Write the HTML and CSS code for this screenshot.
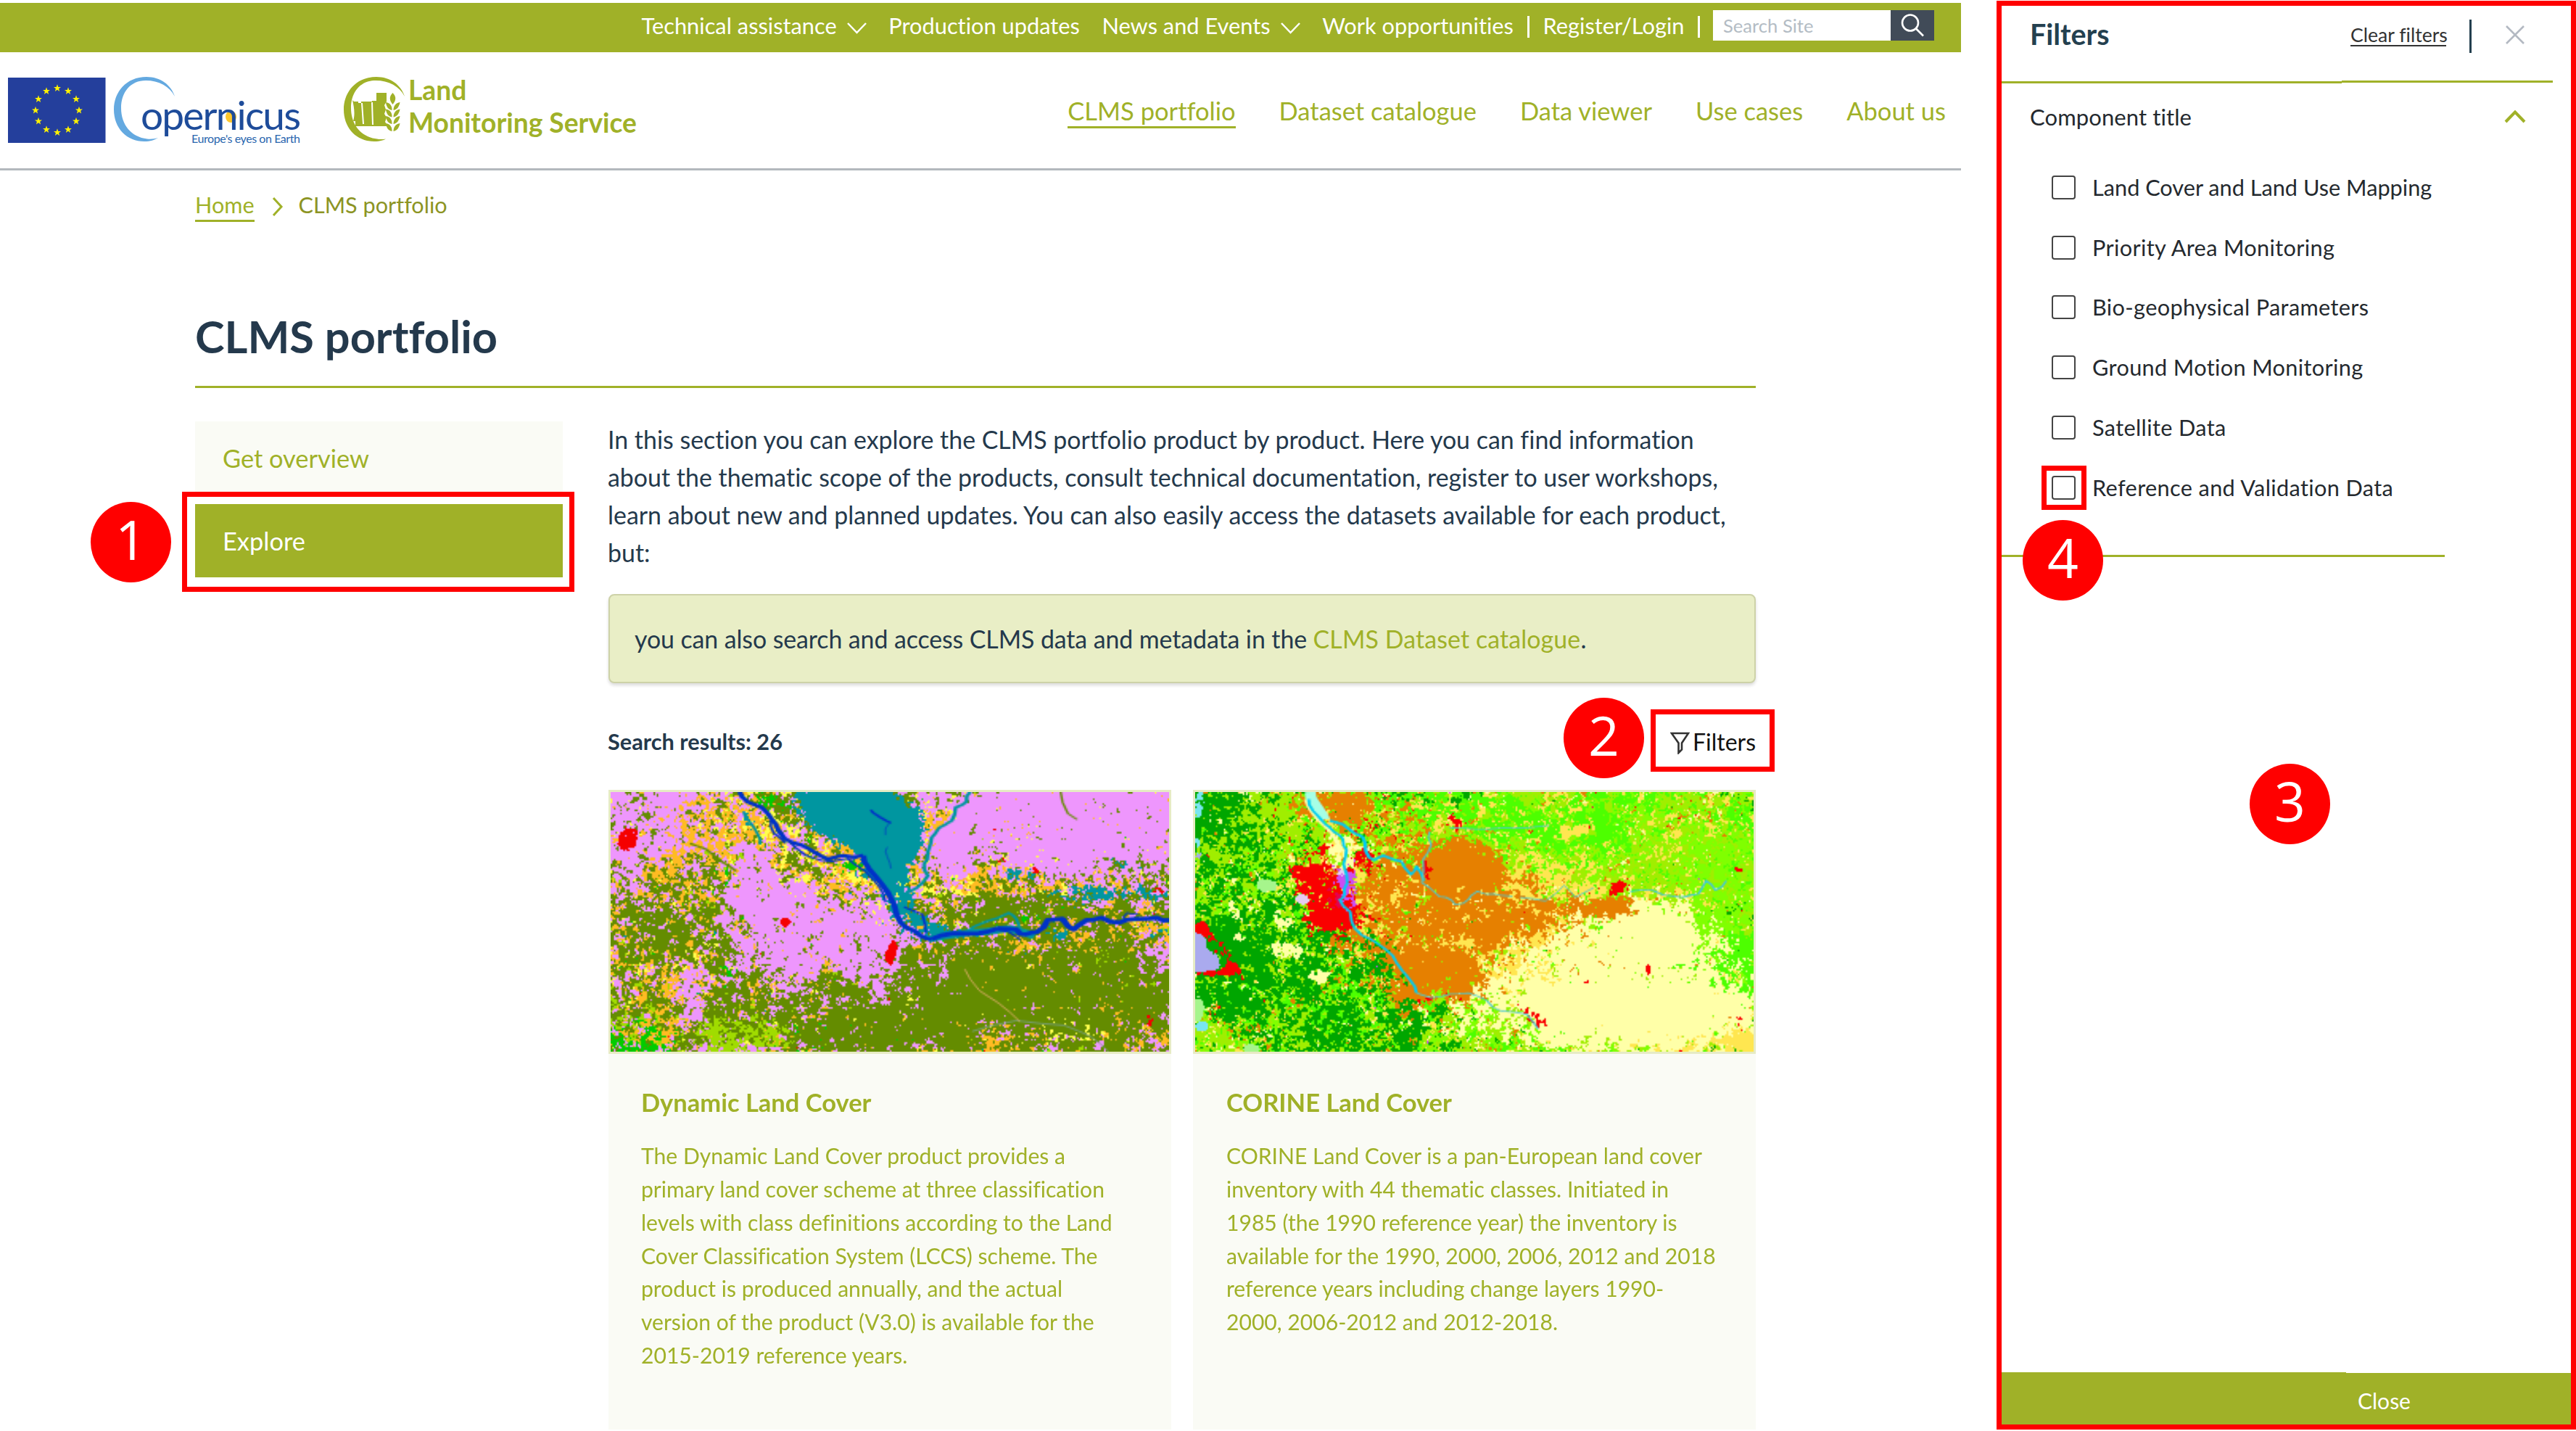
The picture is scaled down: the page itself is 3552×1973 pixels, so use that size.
FILE: index.html
```html
<!DOCTYPE html>
<html lang="en">
<head>
<meta charset="utf-8">
<title>CLMS portfolio</title>
<link rel="stylesheet" href="styles.css">
</head>
<body>
<div class="page">
  <header>
    <nav class="topbar">
      <a>Technical assistance <svg class="chev" viewBox="0 0 27 16"><path d="M1 1l12.500 13L26 1"/></svg></a>
      <a>Production updates</a>
      <a>News and Events <svg class="chev" viewBox="0 0 27 16"><path d="M1 1l12.500 13L26 1"/></svg></a>
      <a>Work opportunities</a>
      <span class="account"><i class="pipe"></i><a>Register/Login</a><i class="pipe"></i></span>
      <span class="search"><span class="search-input">Search Site</span><span class="search-btn"><svg viewBox="0 0 32 32"><circle cx="13" cy="12.500" r="11"/><path d="M21 20.500l10 10"/></svg></span></span>
    </nav>
    <div class="masthead">
      <svg class="logos" viewBox="0 72 900 160">
        <rect x="11" y="107" width="134.500" height="90" fill="#243f9c"/>
        <defs><path id="star" d="M0-5.200 1.300-1.600 5-1.600 2.100.7 3.100 4.400 0 2.200-3.100 4.400-2.100.7-5-1.600-1.300-1.600z"/></defs>
        <g class="stars" id="stars" fill="#fff200">
          <use href="#star" x="79" y="121.500"/><use href="#star" x="94" y="125.500"/><use href="#star" x="105" y="136.500"/><use href="#star" x="109" y="152"/><use href="#star" x="105" y="167"/><use href="#star" x="94" y="178.500"/><use href="#star" x="79" y="182.500"/><use href="#star" x="64" y="178.500"/><use href="#star" x="53" y="167"/><use href="#star" x="49" y="152"/><use href="#star" x="53" y="136.500"/><use href="#star" x="64" y="125.500"/>
        </g>
        <path id="swoosh" fill="#64a9e0" d="M241 133C236 117 221 106 202 106C174 106 157 127 157 151C157 177 175 195 199 195C207 195 213 193 218 190C213 191.500 208 192 203 191.500C181 189 167 172 167 149C167 127 180 111 201 111C219 111 234 119 241 133z"/>
        <ellipse cx="318.500" cy="161" rx="7.500" ry="8" fill="#ffc72c"/>
        <text x="194" y="179" class="cop" textLength="221">opernicus</text>
        <text x="264" y="197" class="eyes" textLength="150">Europe's eyes on Earth</text>
        <g fill="#a0b128">
          <path d="M558 133C553 117 538 106 519 106C491 106 474 127 474 151C474 177 492 195 516 195C524 195 530 193 532 191.500C527 192.500 522 192 520 191.500C498 189 484 172 484 149C484 127 497 111 518 111C536 111 551 119 558 133z"/>
          <path d="M488 140h6v2h4v-2h15v-1h6v-11h14v12l-3 5 2 6-2 6 3 5-2 6 2 3v3h-43v-7h-3c3-10 1-20-1-29z"/>
          <path d="M541.500 128c5 5 5 10 0 16c-5-6-5-11 0-16z"/>
          <g id="leafs"><path d="M540.500 152c-5-1-8-5-8.500-11c6 1 9 5 8.500 11zM542.500 152c5-1 8-5 9-11c-6 1-9 5-9 11z"/><path d="M540.500 161.500c-5-1-8-5-8.500-11c6 1 9 5 8.500 11zM542.500 161.500c5-1 8-5 9-11c-6 1-9 5-9 11z"/><path d="M540.500 171c-5-1-8-5-8.500-11c6 1 9 5 8.500 11zM542.500 171c5-1 8-5 9-11c-6 1-9 5-9 11z"/><path d="M540.500 181c-5-1-8-5-8.500-11c6 1 9 5 8.500 11zM542.500 181c5-1 8-5 9-11c-6 1-9 5-9 11z"/></g>
        </g>
        <path d="M499 142l2 29M513 141l1 31" stroke="#fff" stroke-width="2"/>
        <text x="563" y="138" class="land">Land</text>
        <text x="563" y="183" class="land">Monitoring Service</text>
      </svg>
      <nav class="mainnav"><a class="on">CLMS portfolio</a><a>Dataset catalogue</a><a>Data viewer</a><a>Use cases</a><a>About us</a></nav>
    </div>
  </header>
  <main>
    <div class="crumbs"><a>Home</a><svg viewBox="0 0 16 26"><path d="M2 1l11 12L2 25"/></svg><span>CLMS portfolio</span></div>
    <h1>CLMS portfolio</h1>
    <div class="columns">
      <aside>
        <a class="side">Get overview</a>
        <a class="side active">Explore
          <span class="mark mark-explore"></span><span class="num num-1">1</span></a>
      </aside>
      <section>
        <p class="intro">In this section you can explore the CLMS portfolio product by product. Here you can find information about the thematic scope of the products, consult technical documentation, register to user workshops, learn about new and planned updates. You can also easily access the datasets available for each product, but:</p>
        <div class="notice">you can also search and access CLMS data and metadata in the&nbsp;<a>CLMS Dataset catalogue</a>.</div>
        <div class="results"><b>Search results: 26</b>
          <span class="filter-btn"><svg viewBox="0 0 27 31"><path d="M2 2h23l-9 13.500v9L11.500 29V15.500z"/></svg>Filters
          <span class="mark mark-filter"></span><span class="num num-2">2</span></span></div>
        <div class="cards">
          <article><canvas id="dlc" width="352" height="163"></canvas><h2>Dynamic Land Cover</h2><p>The Dynamic Land Cover product provides a primary land cover scheme at three classification levels with class definitions according to the Land Cover Classification System (LCCS) scheme. The product is produced annually, and the actual version of the product (V3.0) is available for the 2015-2019 reference years.</p></article>
          <article><canvas id="clc" width="352" height="163"></canvas><h2>CORINE Land Cover</h2><p>CORINE Land Cover is a pan-European land cover inventory with 44 thematic classes. Initiated in 1985 (the 1990 reference year) the inventory is available for the 1990, 2000, 2006, 2012 and 2018 reference years including change layers 1990-2000, 2006-2012 and 2012-2018.</p></article>
        </div>
      </section>
    </div>
  </main>
</div>
<div class="panel">
  <div class="panel-head"><b>Filters</b><a>Clear filters</a><i></i><svg viewBox="0 0 26 26"><path d="M1 1l24 24M25 1L1 25"/></svg></div>
  <div class="rule"><i></i><i></i></div>
  <div class="group"><span>Component title</span><svg viewBox="0 0 30 18"><path d="M2 16L15 2.500 28 16"/></svg></div>
  <ul>
    <li><i class="box"></i>Land Cover and Land Use Mapping</li>
    <li><i class="box"></i>Priority Area Monitoring</li>
    <li><i class="box"></i>Bio-geophysical Parameters</li>
    <li><i class="box"></i>Ground Motion Monitoring</li>
    <li><i class="box"></i>Satellite Data</li>
    <li><i class="box"></i>Reference and Validation Data<span class="mark mark-box"></span></li>
  </ul>
  <div class="group-end"><span class="num num-4">4</span></div>
  <span class="num num-3">3</span>
  <div class="close"><i></i><span>Close</span></div>
</div>
<script src="maps.js"></script>
</body>
</html>
```
FILE: styles.css
```css
* { box-sizing: border-box; }
body { margin: 0; width: 3552px; height: 1973px; overflow: hidden; display: flex; gap: 49px; background: #fff; font-family: Lato, sans-serif; font-size: 33.9px; color: #24394c; font-variant-ligatures: none; }
svg { display: block; flex: none; fill: none; }
.page { width: 2704px; height: 1973px; overflow: hidden; flex: none; }
.topbar { margin-top: 4px; height: 68px; padding: 0 37px 6px 0; background: #a0b128; color: #fff; font-size: 30.8px; display: flex; align-items: center; justify-content: flex-end; gap: 30.500px; white-space: nowrap; }
.topbar a { display: flex; align-items: center; gap: 14px; }
.chev { width: 27px; height: 16px; margin-top: 7px; stroke: #fff; stroke-width: 2.5; }
.account { display: flex; align-items: center; gap: 18px; margin: 0 -12px 0 -11px; }
.pipe { width: 3px; height: 30px; background: #fff; margin-top: 3px; }
.search { display: flex; width: 305px; height: 42px; }
.search-input { width: 245px; background: #fff; color: #b3bcc4; font-size: 25.6px; line-height: 43px; padding-left: 14px; }
.search-btn { width: 60px; background: #414b58; display: flex; align-items: center; justify-content: center; }
.search-btn svg { width: 32px; height: 32px; stroke: #fff; stroke-width: 2.6; }
.masthead { height: 163px; border-bottom: 3px solid #b3b8bd; display: flex; justify-content: space-between; align-items: center; padding-right: 21px; }
.logos { width: 900px; height: 160px; }
.cop { font: 400 55px Lato, sans-serif; fill: #1e4c9a; }
.eyes { font: 400 16px Lato, sans-serif; fill: #2a66ae; }
.land { font: 700 37.2px Lato, sans-serif; fill: #a0b128; }
.mainnav { display: flex; gap: 60px; font-size: 34.5px; line-height: 42px; color: #a0b128; padding-top: 1px; }
.mainnav .on { box-shadow: 0 3px #a0b128; }
.crumbs { height: 94px; padding-left: 269px; display: flex; align-items: center; color: #8c9424; font-size: 30.6px; }
.crumbs a { color: #a0b128; line-height: 37px; border-bottom: 3px solid #a0b128; padding-bottom: 2px; margin-top: 5px; }
.crumbs svg { width: 16px; height: 26px; margin: 6px 21px 0 24px; stroke: #a0b128; stroke-width: 3; }
h1 { margin: 0 0 0 269px; width: 2152px; height: 206px; padding-top: 97px; line-height: 74px; font-size: 61.3px; font-weight: 700; border-bottom: 3px solid #a0b128; color: #24394c; }
.columns { display: grid; grid-template-columns: 507px 1582px; gap: 63px; margin: 46px 0 0 269px; }
aside { display: flex; flex-direction: column; gap: 13px; }
.side { position: relative; height: 101px; line-height: 101px; padding-left: 38px; background: #fafbf5; color: #a0b128; font-size: 34.4px; }
.active { background: #a0b128; color: #fff; }
.intro { margin: -1px 0 0 -1px; line-height: 52px; letter-spacing: .01px; }
.notice { margin-top: 31px; height: 123px; line-height: 121px; border: 2px solid #cdd2a8; border-radius: 8px; background: #e9eec6; box-shadow: 0 3px 4px rgba(0,0,0,.14); padding-left: 34px; letter-spacing: -.09px; }
.notice a { color: #a0b128; letter-spacing: .12px; }
.results { height: 147px; padding-top: 13px; display: flex; justify-content: space-between; align-items: center; font-size: 30.7px; }
.results b { margin-left: -1px; }
.filter-btn { position: relative; display: flex; align-items: center; gap: 4px; color: #111; font-size: 32px; }
.filter-btn svg { width: 27px; height: 31px; margin-top: 4px; stroke: #333; stroke-width: 2.6; }
.cards { display: grid; grid-template-columns: 776px 776px; gap: 30px; }
article { height: 882px; background: #fafbf5; color: #a0b128; }
canvas { display: block; width: 776px; height: 364px; border: 3px solid #e6ebc4; }
h2 { margin: 45px 46px 0 45px; font-size: 34.5px; line-height: 44px; }
article p { margin: 29px 56px 0 45px; font-size: 30.1px; line-height: 45.85px; }
article + article h2 { margin-left: 46px; }
article + article p { margin: 29px 53px 0 46px; }
.panel { position: relative; width: 799px; height: 1970px; margin-top: 1px; flex: none; border: 7px solid #f00; display: flex; flex-direction: column; font-size: 31px; color: #24292e; }
.panel-head { height: 103px; padding-left: 39px; display: flex; align-items: flex-start; color: #24404f; }
.panel-head b { font-size: 39.4px; line-height: 46px; margin-top: 16px; width: 442px; }
.panel-head a { font-size: 26.6px; line-height: 27px; border-bottom: 2.500px solid #333; color: #333; margin-top: 27px; width: 132px; white-space: nowrap; }
.panel-head i { width: 3px; height: 46px; background: #24404f; margin: 19px 47px 0 32px; }
.panel-head svg { width: 26px; height: 26px; margin-top: 27px; stroke: #b3b9c2; stroke-width: 2.6; }
.rule { display: flex; height: 4px; }
.rule i { width: 469px; height: 3px; background: #a0b128; margin-top: 1px; }
.rule i + i { width: 291px; margin-top: 0; }
.group { height: 91px; padding: 0 62px 0 39px; display: flex; align-items: center; justify-content: space-between; letter-spacing: .1px; }
.group svg { width: 30px; height: 18px; stroke: #a0b128; stroke-width: 4; }
ul { list-style: none; margin: 11px 0 0 69px; padding: 0; display: flex; flex-direction: column; }
li { position: relative; height: 82.8px; display: flex; align-items: center; gap: 23px; white-space: nowrap; font-size: 30.7px; letter-spacing: .35px; }
li:first-child { letter-spacing: 0; }
.box { width: 33px; height: 33px; border: 2.500px solid #444; border-radius: 4px; }
.group-end { position: relative; width: 611px; height: 54px; border-bottom: 3px solid #a0b128; }
.close { margin-top: auto; display: flex; height: 72px; color: #fff; font-size: 30px; line-height: 76px; }
.close i { width: 475px; background: #a0b128; }
.close span { flex: 1; background: #a0b128; margin-top: 1px; padding-left: 16px; }
.mark { position: absolute; border: 7px solid #f00; }
.mark-explore { left: -18px; top: -17px; width: 541px; height: 138px; }
.mark-filter { right: -26px; top: -25px; width: 171px; height: 86px; }
.mark-box { left: -14px; top: 11px; width: 62px; height: 61px; }
.num { position: absolute; width: 111px; height: 111px; border-radius: 50%; background: #f00; color: #fff; font: 400 75px/103px "Open Sans", sans-serif; letter-spacing: 0; text-align: center; }
.num-1 { left: -144px; top: -3px; }
.num-2 { right: 154px; top: -41px; }
.num-4 { left: 29px; top: 3px; }
.num-3 { left: 342px; top: 1045px; }
```
FILE: maps.js
```
// Land cover thumbnails: every cell takes the class with the highest score,
// where a score is a base level plus soft shapes plus speckle noise.
function hash(x, y, s) {
  let h = (x * 374761393 + y * 668265263 + s * 974634777) | 0;
  h = Math.imul(h ^ (h >>> 13), 1274126177);
  h = Math.imul(h ^ (h >>> 15), 2246822519);
  return ((h ^ (h >>> 16)) >>> 0) / 4294967295;
}
function smooth(x, y, s) {
  const i = Math.floor(x), j = Math.floor(y), f = x - i, g = y - j;
  const a = hash(i, j, s), b = hash(i + 1, j, s), c = hash(i, j + 1, s), d = hash(i + 1, j + 1, s);
  return a + (b - a) * f + (c - a + (a - b - c + d) * f) * g;
}
function speckle(x, y, s) {
  return (hash(x, y, s) - .5) * .6 + (smooth(x / 1.8, y / 1.8, s + 50) - .5) * 1.7 +
    (smooth(x / 5, y / 5, s + 90) - .5) * 1.1 + (smooth(x / 17, y / 17, s + 130) - .5) * .6;
}
function draw(id, grain, classes, lines) {
  const ctx = document.getElementById(id).getContext('2d'), W = 352, H = 163;
  const img = ctx.createImageData(W, H);
  const rgb = classes.map(c => [1, 3, 5].map(i => parseInt(c.color.substr(i, 2), 16)));
  for (let y = 0; y < H; y++) for (let x = 0; x < W; x++) {
    const px = x / W * 1514, py = y / H * 1085;
    let best = -9, win = 0;
    classes.forEach((c, k) => {
      let v = c.base;
      for (const [cx, cy, rx, ry, a, t] of c.at) {
        // t tilts a shape: its centre slides sideways as y grows
        const dx = (px - cx - (t || 0) * (py - cy)) / rx, dy = (py - cy) / ry, q = dx * dx + dy * dy;
        if (q < 6) v += a * Math.exp(-q * q * .6);
      }
      v += speckle(x, y, k * 7 + id.charCodeAt(0)) * (c.n || 1) * grain;
      if (v > best) { best = v; win = k; }
    });
    img.data.set([...rgb[win], 255], (y * W + x) * 4);
  }
  ctx.putImageData(img, 0, 0);
  ctx.scale(W / 1514, H / 1085);
  ctx.lineJoin = 'round';
  for (const [color, width, pts] of lines) {
    ctx.strokeStyle = color; ctx.lineWidth = width; ctx.beginPath();
    for (let i = 0; i < pts.length; i += 2) {
      ctx.lineTo(pts[i], pts[i + 1]);
      if (i + 3 < pts.length) ctx.lineTo((pts[i] + pts[i + 2]) / 2 + (hash(i, 3, 9) - .5) * 16, (pts[i + 1] + pts[i + 3]) / 2 + (hash(i, 5, 9) - .5) * 18);
    }
    ctx.stroke();
  }
}
draw('dlc', 1.15, [
  { color: '#ee96fd', base: 0, at: [[80,90,170,170,1,0],[1250,110,350,230,1.5,0],[920,250,60,120,.7,0],[400,290,60,80,.6,0],[440,420,110,90,.9,0],[560,580,230,150,1.1,0],[730,740,60,140,.8,0],[880,750,50,90,.6,0],[480,720,60,120,.6,0],[210,900,40,180,.9,.1],[1480,690,60,80,.8,0],[120,520,60,60,.4,0],[1100,980,50,40,.6,0],[40,330,50,90,.6,0]] },
  { color: '#648c00', base: .1, at: [[190,430,110,130,.5,-.2],[1200,830,420,200,1.1,0],[700,900,420,170,.6,0],[240,660,200,120,.4,0],[1050,400,150,90,.4,0],[1100,500,350,70,.4,0],[750,1020,200,80,.7,0],[480,70,60,60,.6,0],[300,1000,80,60,.5,0],[1000,680,120,60,.3,0]] },
  { color: '#ffbb22', base: -.25, at: [[290,110,160,120,.8,0],[150,270,50,60,.8,0],[600,370,130,120,.7,0],[430,200,60,90,.5,0],[860,180,40,150,.8,-.3],[1100,380,330,60,.5,0],[1350,600,200,70,.6,0],[1060,650,110,60,.6,0],[100,850,200,200,.3,0],[1050,1020,60,60,.7,0],[1450,1010,80,60,.6,0],[230,390,130,60,.4,0],[840,540,60,60,.5,0]] },
  { color: '#ffff4c', base: -.6, at: [[600,400,150,130,.7,0],[440,220,60,130,.7,0],[1100,270,100,70,1.1,0],[860,150,70,160,.7,-.4],[1000,380,320,50,.7,0],[780,70,60,60,.6,0],[1200,990,200,50,.6,.4],[740,520,50,50,.7,0],[300,120,150,100,.4,0]] },
  { color: '#a0dc00', base: -.75, at: [[370,1040,120,90,1.2,0],[150,950,200,120,.9,0],[1330,780,150,120,.7,0],[280,460,60,80,.4,0],[1100,560,200,60,.4,0],[870,870,80,60,.3,0]] },
  { color: '#00cc00', base: -1.05, at: [[70,1030,110,90,1.6,0],[540,1020,55,60,1.3,0],[440,40,45,40,1.6,.5],[650,310,45,30,1.8,0],[530,190,25,30,1.2,0],[1150,540,60,40,1.2,0],[310,760,40,60,1,0],[1040,530,60,40,.9,0],[220,800,30,30,.8,0]] },
  { color: '#0096a0', base: -1.1, n: .8, at: [[650,90,135,140,3.4,.45],[735,60,90,120,2.2,.55],[750,220,75,110,3.2,0],[760,370,45,130,2.2,.25],[820,550,75,75,1.8,.5],[700,350,60,25,1.5,0],[680,430,50,25,1.5,0],[1120,340,90,28,1.6,0],[1330,420,170,40,1.6,0],[1390,290,60,40,1.4,0],[1200,590,60,40,1.5,0],[1060,660,100,35,1.3,0],[380,110,25,50,1.3,0],[960,580,90,30,1.4,0],[1030,40,25,40,1.4,0],[1270,180,15,40,1.4,0],[1480,580,40,60,1.1,0]] },
  { color: '#f50000', base: -1.2, n: .85, at: [[44,195,27,52,4,-.1],[758,670,15,54,4,-.15],[473,540,15,22,3.4,0],[1060,280,11,16,2.6,0],[1035,145,10,14,2.6,0],[1150,325,10,14,2.6,0],[757,865,8,18,2.6,0],[1460,945,9,26,2.6,0],[1485,410,15,16,2.2,0]] }
], [
  ['#0096a0', 10, [975,0,965,40,935,65,925,120,890,150,870,190,860,250,850,300,860,350,830,400,790,435]],
  ['#0096a0', 8, [360,80,380,130,400,180,405,220]],
  ['#0096a0', 9, [960,590,1020,540,1080,505,1100,530,1110,590]],
  ['#0096a0', 30, [860,615,960,590,1080,570,1150,600]],
  ['#7aa08c', 4, [980,1000,1100,955,1230,975,1300,1020,1350,1085]],
  ['#e6b070', 4, [960,740,1000,830,1050,880,1110,960]],
  ['#0032c8', 14, [350,0,370,40,410,65,435,110,455,160,490,210,540,240,590,280,630,265,685,265]],
  ['#0032c8', 7, [490,215,530,265,570,285,600,290,640,280,680,265]],
  ['#0032c8', 7, [435,120,442,170,475,215]],
  ['#0032c8', 16, [685,265,700,320,735,385,760,445,775,510,800,565,840,600,870,615]],
  ['#0032c8', 6, [640,275,690,330,730,400,745,460]],
  ['#0032c8', 7, [795,480,845,510,855,590]],
  ['#0032c8', 18, [870,615,930,590,1000,590,1050,570,1100,575,1125,595,1155,585,1185,535,1225,530,1255,575,1290,535,1330,525,1380,545,1430,530,1480,525,1514,535]],
  ['#0032c8', 6, [1040,575,1080,585,1110,615]],
  ['#0032c8', 5, [1390,545,1400,505,1430,510]],
  ['#0032c8', 8, [705,75,730,105,760,130]],
  ['#0046c0', 4, [755,130,745,180]],
  ['#0046c0', 4, [750,230,750,270,760,320]],
  ['#648c00', 8, [215,215,260,240,300,290,340,330]],
  ['#648c00', 6, [1220,0,1240,90,1265,115]]
]);
draw('clc', 1.3, [
  { color: '#00a600', base: -.25, at: [[50,60,130,120,1,0],[80,330,160,330,.9,0],[250,640,230,160,.8,0],[60,750,120,140,.6,0],[300,900,220,200,.75,0],[500,740,50,90,1,0],[570,960,50,110,1.2,0],[660,910,25,40,1.3,0],[720,30,40,30,.8,0],[1430,490,50,50,.9,0],[450,1060,150,60,.7,0],[1200,500,350,600,-1,0],[1000,200,250,200,-.2,0],[700,480,300,400,-.5,0]] },
  { color: '#a0ee00', base: -.05, at: [[150,80,200,170,.5,0],[200,500,300,500,.3,0],[1100,200,500,250,.35,0],[800,950,300,150,.3,0],[1250,380,300,100,.3,0],[650,560,280,280,-.3,0]] },
  { color: '#4dff00', base: -.3, at: [[640,60,150,90,.7,0],[1000,90,220,150,.7,0],[900,230,200,120,.5,0],[1130,130,100,150,.5,0],[430,850,110,160,.7,0],[1480,720,80,130,1.6,0],[1490,180,100,200,.4,0],[600,500,250,300,-.4,0]] },
  { color: '#80ff00', base: -.25, at: [[1250,250,300,150,.7,0],[1400,530,130,120,.8,0],[1440,350,100,150,.6,0],[1000,60,300,80,.3,0],[1480,850,70,150,.4,0],[760,920,120,120,.3,0],[600,500,250,300,-.4,0]] },
  { color: '#ffffa8', base: -.6, at: [[1180,760,330,270,2.1,0],[1260,560,120,110,1.4,0],[960,920,230,140,1.1,0],[1350,950,180,140,1.3,0],[250,660,50,35,2.3,.5],[330,770,30,35,2.3,0],[105,490,13,50,2.4,.2],[115,600,30,20,2,0],[50,110,20,22,2.3,.7],[235,545,20,35,1.8,0],[390,250,40,80,1.6,0],[120,25,30,40,1.2,0],[770,440,40,30,1.3,0],[60,1030,40,40,.9,0],[480,240,20,30,1,0]] },
  { color: '#ffe650', base: -.4, at: [[650,450,350,250,.4,0],[1000,160,60,25,1.8,-.6],[370,170,25,120,1.1,.2],[1150,150,330,170,.6,0],[980,380,280,70,.8,0],[900,640,150,150,.9,0],[850,830,150,120,.6,0],[1300,1050,130,50,1.4,0],[1480,1050,50,60,1.6,0],[1420,720,50,120,.6,0],[700,100,250,80,.5,0],[1350,440,200,50,.6,0],[730,560,60,160,.3,0]] },
  { color: '#e68000', base: -.7, at: [[400,55,70,85,2,0],[730,330,90,105,2.4,0],[550,250,150,180,.8,0],[680,560,300,290,1.2,0],[620,570,130,140,.5,0],[680,780,120,110,1.1,0],[870,500,160,110,.6,0],[1130,480,80,45,2,0],[800,600,50,70,.8,0],[920,360,80,30,.8,0],[560,880,40,70,1.4,0],[290,60,50,90,1,0],[490,700,90,100,.5,.8],[1050,520,150,80,.7,0],[840,1040,60,60,.6,0]] },
  { color: '#fa0000', base: -1.15, n: .95, at: [[365,430,95,110,2,0],[290,340,60,40,1.2,0],[400,520,90,50,1.2,0],[450,290,40,40,1.4,0],[500,170,130,150,.6,0],[340,260,40,60,.9,0],[350,580,70,60,.9,0],[630,320,15,35,2.8,0],[60,640,25,100,2.4,.5],[40,745,45,25,3.4,0],[100,740,25,30,2.8,0],[15,570,20,30,2.8,0],[1145,400,25,40,2.2,0],[920,940,30,50,2.5,.5],[860,900,30,25,1.6,0],[910,170,20,20,2,0],[1060,130,25,25,1.7,0],[710,120,35,40,1.4,-.4],[1060,800,10,28,3,0],[1225,740,7,28,3,0],[625,880,25,35,1.6,0],[1300,1070,35,18,2,0],[1485,960,25,50,1.8,0],[1470,320,13,16,2.4,0],[250,60,300,150,.25,0],[950,410,300,60,.4,0],[550,430,200,300,.25,0],[700,850,60,25,1.1,0],[130,790,20,20,1.6,0],[180,870,20,20,1.6,0]] },
  { color: '#cc4df2', base: -1.6, n: .9, at: [[405,370,30,40,2.3,0],[410,460,30,50,1.9,0],[350,420,120,110,1,0],[420,300,40,60,1.2,0],[890,920,25,25,1.7,0],[1165,420,20,30,1.5,0],[210,650,40,80,.7,0],[495,730,15,15,1.8,0]] },
  { color: '#e6004d', base: -1.6, n: .8, at: [[375,440,28,60,3.1,0]] },
  { color: '#a6f58c', base: -1.9, n: .7, at: [[190,385,32,28,4,0],[150,1070,25,25,3.7,0],[5,900,18,60,3.6,0]] },
  { color: '#aaaaee', base: -1.8, n: .7, at: [[20,690,36,52,4.6,.45],[5,705,49,49,4,0],[0,620,27,44,4.6,0],[5,260,13,25,3,0]] },
  { color: '#e6ccf0', base: -1.8, n: .7, at: [[290,445,18,25,3.8,0],[395,340,15,20,3.4,0]] },
  { color: '#78e6f0', base: -1.7, n: .8, at: [[3,50,20,80,4,-.15],[3,220,10,40,3.6,0],[15,975,18,20,3.6,0]] }
], [
  ['#ffffa8', 12, [300,30,330,110,370,170,395,250]],
  ['#a6ffe6', 30, [312,0,325,50,352,115]],
  ['#00ccf2', 8, [308,30,320,80,350,130,375,165,400,195,410,240,402,300,412,380,405,430,392,450,420,500,433,570,470,610,510,650,545,710,575,770,600,840]],
  ['#00ccf2', 10, [365,120,400,135,430,170,455,190,462,245,485,285,510,265,560,290]],
  ['#00ccf2', 8, [560,290,585,345,600,310,620,370]],
  ['#4cc8d0', 5, [635,165,640,220,618,280,615,380,650,420,680,440,705,470,740,450,765,415,810,425,860,435]],
  ['#4cc8d0', 4, [880,440,950,455,1000,390,1030,440,1080,400]],
  ['#4cc8d0', 4, [690,150,760,155,830,150,900,150,960,140]],
  ['#3cc8e0', 6, [1180,415,1240,410,1270,430,1320,440,1365,425,1385,370,1410,410,1440,370]],
  ['#4cc8d0', 5, [600,840,640,860,690,845,740,840,790,870,830,915,900,930,930,990]]
]);
```
